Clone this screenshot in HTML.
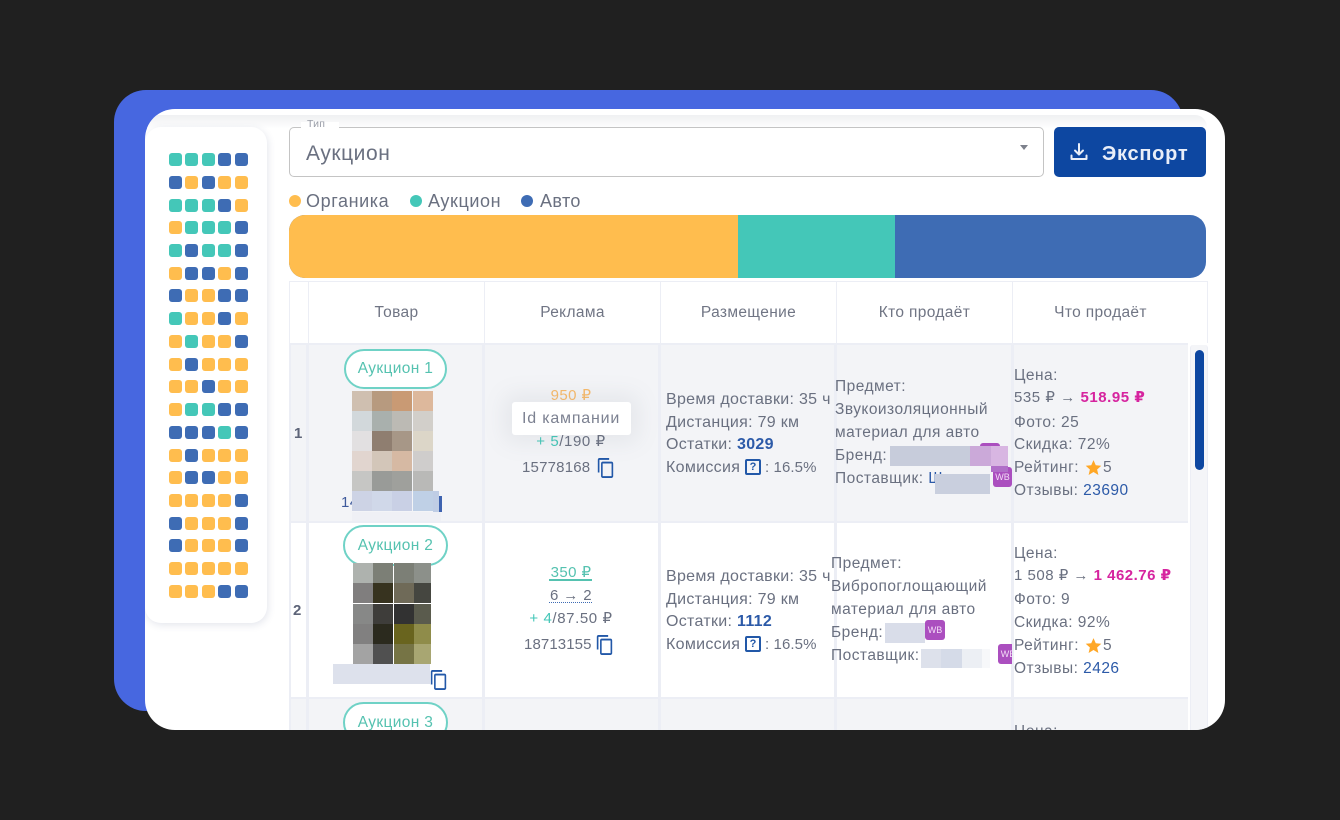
<!DOCTYPE html>
<html lang="ru"><head><meta charset="utf-8"><title>Аукцион</title>
<style>
html,body{margin:0;padding:0;background:#202020;width:1340px;height:820px;overflow:hidden}
*{box-sizing:border-box}
body{font-family:"Liberation Sans","DejaVu Sans",sans-serif;color:#6a7080;position:relative}
.a{position:absolute}
#blue{left:114px;top:90px;width:1069px;height:621px;background:#4767e0;border-radius:32px}
#card{left:145px;top:109px;width:1080px;height:621px;background:#fff;border-radius:30px;overflow:hidden}
#in{left:-145px;top:-109px;width:1340px;height:820px}
.t{position:absolute;height:20px;line-height:20px;font-size:15px;white-space:nowrap;letter-spacing:.42px;margin-top:1px}
.m{font-size:16px;letter-spacing:.3px}
.s{font-size:15.500px;letter-spacing:.47px}
.b{color:#2c5aa8}
.sq{position:absolute;width:13px;height:13px;border-radius:3px}
.O{background:#ffbd4e}.T{background:#44c7b8}.B{background:#3e6cb4}
.l{position:absolute;background:#eceef5}
.pill{position:absolute;border:2px solid #6fd2c6;border-radius:21px;background:#fff;color:#55c2b0;font-size:15.500px;letter-spacing:.35px;text-align:center;white-space:nowrap}
.p{position:absolute;width:20.200px;height:20.200px}
.wb{position:absolute;width:20px;height:20px;background:#ab4fbf;border-radius:3px;color:#f3dcf7;font-size:9px;line-height:20px;text-align:center}
.h{position:absolute;top:303px;height:20px;line-height:20px;font-size:15.500px;text-align:center;white-space:nowrap;color:#707584;letter-spacing:.35px}
.q{position:absolute;width:16px;height:16px;border:2px solid #2258a8;border-radius:2px;color:#2258a8;font-size:11px;font-weight:bold;line-height:12px;text-align:center}
</style></head><body>
<div class="a" id="blue"></div>
<div class="a" id="card"><div class="a" id="in">

<div class="a" style="left:147px;top:115px;width:1060px;height:14px;background:linear-gradient(#eff0f2,#fff);border-radius:12px 12px 0 0"></div>

<!-- left panel -->
<div class="a" style="left:145px;top:127px;width:122px;height:496px;background:#fff;border-radius:16px;box-shadow:1px 2px 8px rgba(60,70,120,.14)"></div>
<div id="sqs"><i class="sq T" style="left:169px;top:153px"></i><i class="sq T" style="left:185.400px;top:153px"></i><i class="sq T" style="left:201.800px;top:153px"></i><i class="sq B" style="left:218.200px;top:153px"></i><i class="sq B" style="left:234.600px;top:153px"></i>
<i class="sq B" style="left:169px;top:175.800px"></i><i class="sq O" style="left:185.400px;top:175.800px"></i><i class="sq B" style="left:201.800px;top:175.800px"></i><i class="sq O" style="left:218.200px;top:175.800px"></i><i class="sq O" style="left:234.600px;top:175.800px"></i>
<i class="sq T" style="left:169px;top:198.500px"></i><i class="sq T" style="left:185.400px;top:198.500px"></i><i class="sq T" style="left:201.800px;top:198.500px"></i><i class="sq B" style="left:218.200px;top:198.500px"></i><i class="sq O" style="left:234.600px;top:198.500px"></i>
<i class="sq O" style="left:169px;top:221.200px"></i><i class="sq T" style="left:185.400px;top:221.200px"></i><i class="sq T" style="left:201.800px;top:221.200px"></i><i class="sq T" style="left:218.200px;top:221.200px"></i><i class="sq B" style="left:234.600px;top:221.200px"></i>
<i class="sq T" style="left:169px;top:244px"></i><i class="sq B" style="left:185.400px;top:244px"></i><i class="sq T" style="left:201.800px;top:244px"></i><i class="sq T" style="left:218.200px;top:244px"></i><i class="sq B" style="left:234.600px;top:244px"></i>
<i class="sq O" style="left:169px;top:266.700px"></i><i class="sq B" style="left:185.400px;top:266.700px"></i><i class="sq B" style="left:201.800px;top:266.700px"></i><i class="sq O" style="left:218.200px;top:266.700px"></i><i class="sq B" style="left:234.600px;top:266.700px"></i>
<i class="sq B" style="left:169px;top:289.400px"></i><i class="sq O" style="left:185.400px;top:289.400px"></i><i class="sq O" style="left:201.800px;top:289.400px"></i><i class="sq B" style="left:218.200px;top:289.400px"></i><i class="sq B" style="left:234.600px;top:289.400px"></i>
<i class="sq T" style="left:169px;top:312.200px"></i><i class="sq O" style="left:185.400px;top:312.200px"></i><i class="sq O" style="left:201.800px;top:312.200px"></i><i class="sq B" style="left:218.200px;top:312.200px"></i><i class="sq O" style="left:234.600px;top:312.200px"></i>
<i class="sq O" style="left:169px;top:335px"></i><i class="sq T" style="left:185.400px;top:335px"></i><i class="sq O" style="left:201.800px;top:335px"></i><i class="sq O" style="left:218.200px;top:335px"></i><i class="sq B" style="left:234.600px;top:335px"></i>
<i class="sq O" style="left:169px;top:357.600px"></i><i class="sq B" style="left:185.400px;top:357.600px"></i><i class="sq O" style="left:201.800px;top:357.600px"></i><i class="sq O" style="left:218.200px;top:357.600px"></i><i class="sq O" style="left:234.600px;top:357.600px"></i>
<i class="sq O" style="left:169px;top:380.400px"></i><i class="sq O" style="left:185.400px;top:380.400px"></i><i class="sq B" style="left:201.800px;top:380.400px"></i><i class="sq O" style="left:218.200px;top:380.400px"></i><i class="sq O" style="left:234.600px;top:380.400px"></i>
<i class="sq O" style="left:169px;top:403px"></i><i class="sq T" style="left:185.400px;top:403px"></i><i class="sq T" style="left:201.800px;top:403px"></i><i class="sq B" style="left:218.200px;top:403px"></i><i class="sq B" style="left:234.600px;top:403px"></i>
<i class="sq B" style="left:169px;top:425.800px"></i><i class="sq B" style="left:185.400px;top:425.800px"></i><i class="sq B" style="left:201.800px;top:425.800px"></i><i class="sq T" style="left:218.200px;top:425.800px"></i><i class="sq B" style="left:234.600px;top:425.800px"></i>
<i class="sq O" style="left:169px;top:448.500px"></i><i class="sq B" style="left:185.400px;top:448.500px"></i><i class="sq O" style="left:201.800px;top:448.500px"></i><i class="sq O" style="left:218.200px;top:448.500px"></i><i class="sq O" style="left:234.600px;top:448.500px"></i>
<i class="sq O" style="left:169px;top:471.200px"></i><i class="sq B" style="left:185.400px;top:471.200px"></i><i class="sq B" style="left:201.800px;top:471.200px"></i><i class="sq O" style="left:218.200px;top:471.200px"></i><i class="sq O" style="left:234.600px;top:471.200px"></i>
<i class="sq O" style="left:169px;top:494px"></i><i class="sq O" style="left:185.400px;top:494px"></i><i class="sq O" style="left:201.800px;top:494px"></i><i class="sq O" style="left:218.200px;top:494px"></i><i class="sq B" style="left:234.600px;top:494px"></i>
<i class="sq B" style="left:169px;top:516.700px"></i><i class="sq O" style="left:185.400px;top:516.700px"></i><i class="sq O" style="left:201.800px;top:516.700px"></i><i class="sq O" style="left:218.200px;top:516.700px"></i><i class="sq B" style="left:234.600px;top:516.700px"></i>
<i class="sq B" style="left:169px;top:539.400px"></i><i class="sq O" style="left:185.400px;top:539.400px"></i><i class="sq O" style="left:201.800px;top:539.400px"></i><i class="sq O" style="left:218.200px;top:539.400px"></i><i class="sq B" style="left:234.600px;top:539.400px"></i>
<i class="sq O" style="left:169px;top:562.200px"></i><i class="sq O" style="left:185.400px;top:562.200px"></i><i class="sq O" style="left:201.800px;top:562.200px"></i><i class="sq O" style="left:218.200px;top:562.200px"></i><i class="sq O" style="left:234.600px;top:562.200px"></i>
<i class="sq O" style="left:169px;top:585px"></i><i class="sq O" style="left:185.400px;top:585px"></i><i class="sq O" style="left:201.800px;top:585px"></i><i class="sq B" style="left:218.200px;top:585px"></i><i class="sq B" style="left:234.600px;top:585px"></i></div>

<!-- select -->
<div class="a" style="left:289px;top:127px;width:755px;height:50px;border:1px solid #c4c4c4;border-radius:5px;background:#fff"></div>
<div class="a" style="left:301px;top:122px;width:38px;height:8px;background:#fff"></div>
<div class="t" style="left:307px;top:113px;font-size:10.500px;color:#9a9ea8;letter-spacing:.2px">Тип</div>
<div class="t" style="left:306px;top:143px;font-size:21px;letter-spacing:.55px">Аукцион</div>
<div class="a" style="left:1020px;top:145px;width:0;height:0;border-left:4.500px solid transparent;border-right:4.500px solid transparent;border-top:5px solid #7d818c"></div>

<!-- export -->
<div class="a" style="left:1054px;top:127px;width:152px;height:50px;background:#0d47a1;border-radius:5px"></div>
<svg class="a" style="left:1069px;top:142px" width="20" height="20" viewBox="0 0 20 20" fill="none" stroke="#e9eef8" stroke-width="2" stroke-linecap="round" stroke-linejoin="round"><path d="M10 2v10M6 8.500l4 4 4-4M2.500 13.500v3.500h15v-3.500"/></svg>
<div class="t" style="left:1102px;top:143px;font-size:20px;font-weight:bold;color:#e9eef8;letter-spacing:.75px">Экспорт</div>

<!-- legend -->
<div class="a O" style="left:289px;top:195px;width:12px;height:12px;border-radius:50%"></div>
<div class="t" style="left:306px;top:190px;font-size:18px;letter-spacing:.6px">Органика</div>
<div class="a T" style="left:410px;top:195px;width:12px;height:12px;border-radius:50%"></div>
<div class="t" style="left:428px;top:190px;font-size:18px;letter-spacing:.6px">Аукцион</div>
<div class="a B" style="left:521px;top:195px;width:12px;height:12px;border-radius:50%"></div>
<div class="t" style="left:540px;top:190px;font-size:18px;letter-spacing:.4px">Авто</div>

<!-- bar -->
<div class="a" style="left:289px;top:215px;width:917px;height:63px;border-radius:16px;overflow:hidden;background:#3e6cb4">
<div class="a O" style="left:0;top:0;width:449px;height:63px"></div>
<div class="a T" style="left:449px;top:0;width:157px;height:63px"></div>
</div>

<!-- table rows -->
<div class="a" style="left:289px;top:345px;width:899px;height:176px;background:#f3f4f7"></div>
<div class="a" style="left:289px;top:699px;width:899px;height:40px;background:#f3f4f7"></div>
<div class="a" style="left:1190px;top:345px;width:18px;height:400px;background:#f4f5f8;border-left:1px solid #eceef5;border-right:1px solid #eceef5;border-radius:3px 3px 0 0"></div>
<div class="a" style="left:1195px;top:350px;width:9px;height:120px;background:#0d47a1;border-radius:5px"></div>

<!-- grid -->
<div class="l" style="left:289px;top:281px;width:918px;height:1px"></div>
<div class="l" style="left:289px;top:343px;width:899px;height:2px"></div>
<div class="l" style="left:289px;top:521px;width:899px;height:2px"></div>
<div class="l" style="left:289px;top:697px;width:899px;height:2px"></div>
<div class="l" style="left:289px;top:281px;width:1px;height:62px"></div>
<div class="l" style="left:308px;top:281px;width:1px;height:62px"></div>
<div class="l" style="left:484px;top:281px;width:1px;height:62px"></div>
<div class="l" style="left:660px;top:281px;width:1px;height:62px"></div>
<div class="l" style="left:836px;top:281px;width:1px;height:62px"></div>
<div class="l" style="left:1012px;top:281px;width:1px;height:62px"></div>
<div class="l" style="left:1207px;top:281px;width:1px;height:62px"></div>
<div class="l" style="left:289px;top:343px;width:1.500px;height:400px"></div>
<div class="l" style="left:306px;top:343px;width:2.500px;height:400px"></div>
<div class="l" style="left:482px;top:343px;width:3px;height:400px"></div>
<div class="l" style="left:658px;top:343px;width:3px;height:400px"></div>
<div class="l" style="left:834px;top:343px;width:3px;height:400px"></div>
<div class="l" style="left:1011px;top:343px;width:3px;height:400px"></div>

<!-- header -->
<div class="h" style="left:309px;width:175px">Товар</div>
<div class="h" style="left:485px;width:175px">Реклама</div>
<div class="h" style="left:661px;width:175px">Размещение</div>
<div class="h" style="left:837px;width:175px">Кто продаёт</div>
<div class="h" style="left:1013px;width:175px">Что продаёт</div>

<!-- row numbers -->
<div class="t" style="left:294px;top:423px;font-weight:bold;font-size:15px;color:#5d6478">1</div>
<div class="t" style="left:293px;top:600px;font-weight:bold;font-size:15px;color:#5d6478">2</div>

<!-- pills -->
<div class="pill" style="left:344px;top:349px;width:103px;height:40px;line-height:36px">Аукцион 1</div>
<div class="pill" style="left:343px;top:525px;width:105px;height:41px;line-height:37px">Аукцион 2</div>
<div class="pill" style="left:343px;top:702px;width:105px;height:41px;line-height:37px">Аукцион 3</div>

<!-- image 1 -->
<i class="p" style="left:352px;top:391px;background:#cfbfb0"></i><i class="p" style="left:372px;top:391px;background:#b79a7f"></i><i class="p" style="left:392px;top:391px;background:#c99a74"></i><i class="p" style="left:412.600px;top:391px;background:#ddb89c"></i>
<i class="p" style="left:352px;top:411px;background:#d2d8db"></i><i class="p" style="left:372px;top:411px;background:#a9b0ad"></i><i class="p" style="left:392px;top:411px;background:#bcbab4"></i><i class="p" style="left:412.600px;top:411px;background:#d2cfca"></i>
<i class="p" style="left:352px;top:431px;background:#e2e0e1"></i><i class="p" style="left:372px;top:431px;background:#8f7e70"></i><i class="p" style="left:392px;top:431px;background:#a79787"></i><i class="p" style="left:412.600px;top:431px;background:#dcd6c8"></i>
<i class="p" style="left:352px;top:451px;background:#e1d5cf"></i><i class="p" style="left:372px;top:451px;background:#d3c6b9"></i><i class="p" style="left:392px;top:451px;background:#d6b9a3"></i><i class="p" style="left:412.600px;top:451px;background:#cfcdcc"></i>
<i class="p" style="left:352px;top:471px;background:#c6c6c4"></i><i class="p" style="left:372px;top:471px;background:#999b98"></i><i class="p" style="left:392px;top:471px;background:#9fa09c"></i><i class="p" style="left:412.600px;top:471px;background:#b9b9b7"></i>
<div class="t" style="left:341px;top:492px;font-size:15px;color:#3f5a9c">14</div>
<div class="a" style="left:439px;top:496px;width:3px;height:16px;background:#3e63b0"></div>
<i class="p" style="left:352px;top:491px;background:#cdd3e5"></i><i class="p" style="left:372px;top:491px;background:#d0d8e9"></i><i class="p" style="left:392px;top:491px;background:#c9d0e5"></i><i class="p" style="left:412.600px;top:491px;background:#bfd0e6"></i>
<div class="a" style="left:433px;top:491px;width:6px;height:21px;background:#bfcde5"></div>
<div class="a" style="left:352px;top:512px;width:89px;height:9px;background:#eff0f5"></div>

<!-- image 2 -->
<i class="p" style="left:353px;top:563px;background:#aeb2ae"></i><i class="p" style="left:373px;top:563px;background:#7c7f76"></i><i class="p" style="left:393.500px;top:563px;background:#7c7f76"></i><i class="p" style="left:413.500px;top:563px;width:17px;background:#8c908a"></i>
<i class="p" style="left:353px;top:583px;background:#807e7e"></i><i class="p" style="left:373px;top:583px;background:#37331f"></i><i class="p" style="left:393.500px;top:583px;background:#6f6a58"></i><i class="p" style="left:413.500px;top:583px;width:17px;background:#454640"></i>
<i class="p" style="left:353px;top:603.500px;background:#878887"></i><i class="p" style="left:373px;top:603.500px;background:#3e3d3a"></i><i class="p" style="left:393.500px;top:603.500px;background:#323232"></i><i class="p" style="left:413.500px;top:603.500px;width:17px;background:#5a5b4d"></i>
<i class="p" style="left:353px;top:623.500px;background:#818080"></i><i class="p" style="left:373px;top:623.500px;background:#2b2a1e"></i><i class="p" style="left:393.500px;top:623.500px;background:#69641e"></i><i class="p" style="left:413.500px;top:623.500px;width:17px;background:#8f8c4a"></i>
<i class="p" style="left:353px;top:644px;background:#a3a3a3"></i><i class="p" style="left:373px;top:644px;background:#505050"></i><i class="p" style="left:393.500px;top:644px;background:#767445"></i><i class="p" style="left:413.500px;top:644px;width:17px;background:#a8a672"></i>
<div class="a" style="left:333px;top:664px;width:97px;height:20px;background:#dde1ec"></div>
<svg class="a" style="left:430px;top:670px" width="17" height="20" viewBox="1 1 21 22" preserveAspectRatio="none"><path fill="#2258a8" d="M16 1H4c-1.100 0-2 .9-2 2v14h2V3h12V1zm3 4H8c-1.100 0-2 .9-2 2v14c0 1.100.9 2 2 2h11c1.100 0 2-.9 2-2V7c0-1.100-.9-2-2-2zm0 16H8V7h11v14z"/></svg>

<!-- ads row 1 -->
<div class="t" style="left:485px;width:172px;top:385px;text-align:center;color:#f8ba6a">950 ₽</div>
<div class="t" style="left:485px;width:172px;top:431px;text-align:center;letter-spacing:.6px"><span style="color:#44c7b8">+ 5</span>/190 ₽</div>
<div class="t" style="left:522px;top:457px;letter-spacing:.2px">15778168</div>
<svg class="a" style="left:597px;top:458px" width="17" height="20" viewBox="1 1 21 22" preserveAspectRatio="none"><path fill="#2258a8" d="M16 1H4c-1.100 0-2 .9-2 2v14h2V3h12V1zm3 4H8c-1.100 0-2 .9-2 2v14c0 1.100.9 2 2 2h11c1.100 0 2-.9 2-2V7c0-1.100-.9-2-2-2zm0 16H8V7h11v14z"/></svg>
<div class="a" style="left:512px;top:402px;width:119px;height:33px;background:#fff;border-radius:3px;box-shadow:0 0 22px 8px rgba(120,125,140,.1)"></div>
<div class="t" style="left:522px;top:408px;font-size:16px;letter-spacing:.8px;color:#7c8191">Id кампании</div>

<!-- ads row 2 -->
<div class="t" style="left:485px;width:172px;top:562px;text-align:center;color:#55c2b0">350 ₽</div>
<div class="a" style="left:549px;top:579px;width:43px;height:1.500px;background:#55c2b0"></div>
<div class="t" style="left:485px;width:172px;top:585px;text-align:center">6 → 2</div>
<div class="a" style="left:549px;top:602px;width:43px;height:0;border-top:1px dotted #3e6cb4"></div>
<div class="t" style="left:485px;width:172px;top:608px;text-align:center;letter-spacing:.6px"><span style="color:#44c7b8">+ 4</span>/87.50 ₽</div>
<div class="t" style="left:524px;top:634px;letter-spacing:.1px">18713155</div>
<svg class="a" style="left:596px;top:635px" width="17" height="20" viewBox="1 1 21 22" preserveAspectRatio="none"><path fill="#2258a8" d="M16 1H4c-1.100 0-2 .9-2 2v14h2V3h12V1zm3 4H8c-1.100 0-2 .9-2 2v14c0 1.100.9 2 2 2h11c1.100 0 2-.9 2-2V7c0-1.100-.9-2-2-2zm0 16H8V7h11v14z"/></svg>

<!-- placement 1 -->
<div class="a" style="left:661px;top:345px;width:173px;height:176px;overflow:hidden">
<div class="t m" style="left:5px;top:44px">Время доставки: 35 ч</div>
<div class="t m" style="left:5px;top:67px">Дистанция: 79 км</div>
<div class="t m" style="left:5px;top:89px">Остатки: <b class="b">3029</b></div>
<div class="t m" style="left:5px;top:112px">Комиссия</div>
<div class="q" style="left:84px;top:114px">?</div>
<div class="t" style="left:104px;top:112px;letter-spacing:.1px">: 16.5%</div>
</div>
<!-- placement 2 -->
<div class="a" style="left:661px;top:523px;width:173px;height:174px;overflow:hidden">
<div class="t m" style="left:5px;top:43px">Время доставки: 35 ч</div>
<div class="t m" style="left:5px;top:66px">Дистанция: 79 км</div>
<div class="t m" style="left:5px;top:88px">Остатки: <b class="b">1112</b></div>
<div class="t m" style="left:5px;top:111px">Комиссия</div>
<div class="q" style="left:84px;top:113px">?</div>
<div class="t" style="left:104px;top:111px;letter-spacing:.1px">: 16.5%</div>
</div>

<!-- seller 1 -->
<div class="t s" style="left:835px;top:376px">Предмет:</div>
<div class="t s" style="left:835px;top:399px">Звукоизоляционный</div>
<div class="t s" style="left:835px;top:422px">материал для авто</div>
<div class="t s" style="left:835px;top:445px">Бренд:</div>
<div class="t s" style="left:835px;top:468px">Поставщик: <span class="b">Ш</span></div>
<div class="wb" style="left:980px;top:443px"></div>
<div class="a" style="left:890px;top:446px;width:80px;height:20px;background:#c7ccdb"></div>
<div class="a" style="left:970px;top:446px;width:21px;height:20px;background:#cba9d9"></div>
<div class="a" style="left:991px;top:446px;width:17px;height:20px;background:#d8b6e2"></div>
<div class="wb" style="left:993px;top:467px;width:19px">WB</div>
<div class="a" style="left:991px;top:466px;width:17px;height:6px;background:#b06fc8"></div>
<div class="a" style="left:935px;top:474px;width:55px;height:20px;background:#c9cfde"></div>

<!-- seller 2 -->
<div class="t s" style="left:831px;top:553px">Предмет:</div>
<div class="t s" style="left:831px;top:576px">Вибропоглощающий</div>
<div class="t s" style="left:831px;top:599px">материал для авто</div>
<div class="t s" style="left:831px;top:622px">Бренд:</div>
<div class="t s" style="left:831px;top:645px">Поставщик:</div>
<div class="a" style="left:885px;top:623px;width:40px;height:20px;background:#d9dde9"></div>
<div class="wb" style="left:925px;top:620px">WB</div>
<div class="a" style="left:921px;top:649px;width:20px;height:19px;background:#dde1eb"></div>
<div class="a" style="left:941px;top:649px;width:21px;height:19px;background:#d5dbe8"></div>
<div class="a" style="left:962px;top:649px;width:20px;height:19px;background:#eceff4"></div>
<div class="a" style="left:982px;top:649px;width:8px;height:19px;background:#f7f8fa"></div>
<div class="a" style="left:998px;top:644px;width:14px;height:20px;overflow:hidden"><div class="wb" style="left:0;top:0">WB</div></div>

<!-- what 1 -->
<div class="t s" style="left:1014px;top:365px">Цена:</div>
<div class="t" style="left:1014px;top:387px;letter-spacing:.55px">535 ₽ → <b style="color:#d6249f">518.95 ₽</b></div>
<div class="t s" style="left:1014px;top:412px">Фото: 25</div>
<div class="t s" style="left:1014px;top:434px">Скидка: 72%</div>
<div class="t s" style="left:1014px;top:457px">Рейтинг:</div>
<svg class="a" style="left:1085px;top:459px" width="17" height="17" viewBox="0 0 24 24"><path fill="#ffa726" d="M12 1.500l3.200 7.300 7.800.8-5.900 5.200 1.800 7.700L12 18.400l-6.900 4.100 1.800-7.700L1 9.600l7.800-.8z"/></svg>
<div class="t s" style="left:1103px;top:457px">5</div>
<div class="t s" style="left:1014px;top:480px">Отзывы: <span class="b">23690</span></div>

<!-- what 2 -->
<div class="t s" style="left:1014px;top:543px">Цена:</div>
<div class="t" style="left:1014px;top:565px;letter-spacing:.5px">1 508 ₽ → <b style="color:#d6249f">1 462.76 ₽</b></div>
<div class="t s" style="left:1014px;top:589px">Фото: 9</div>
<div class="t s" style="left:1014px;top:612px">Скидка: 92%</div>
<div class="t s" style="left:1014px;top:635px">Рейтинг:</div>
<svg class="a" style="left:1085px;top:637px" width="17" height="17" viewBox="0 0 24 24"><path fill="#ffa726" d="M12 1.500l3.200 7.300 7.800.8-5.900 5.200 1.800 7.700L12 18.400l-6.900 4.100 1.800-7.700L1 9.600l7.800-.8z"/></svg>
<div class="t s" style="left:1103px;top:635px">5</div>
<div class="t s" style="left:1014px;top:658px">Отзывы: <span class="b">2426</span></div>
<!-- what 3 -->
<div class="t s" style="left:1014px;top:721px">Цена:</div>

</div></div>
</body></html>
